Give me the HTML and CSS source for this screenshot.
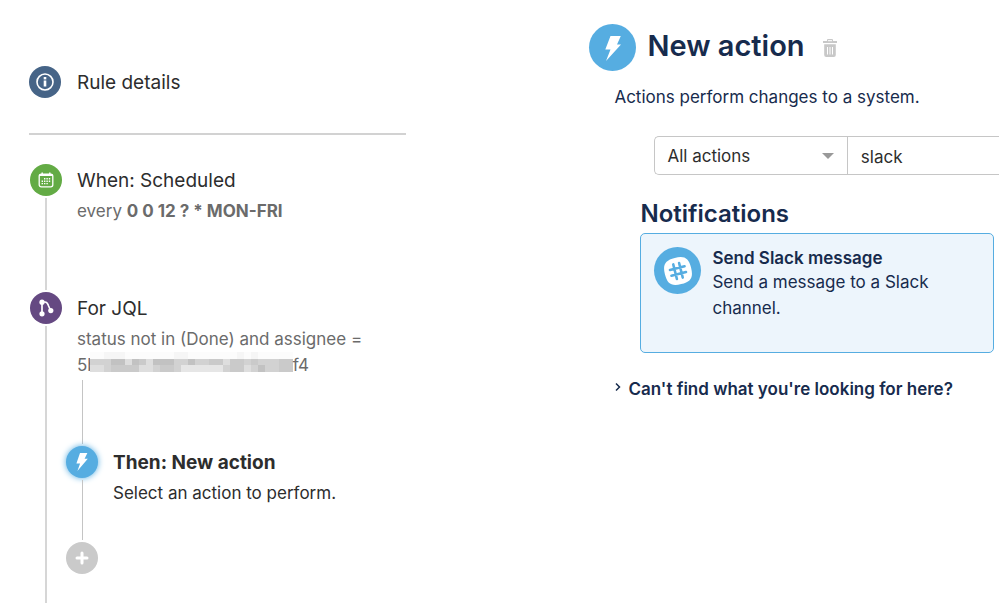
FILE: index.html
```html
<!DOCTYPE html>
<html lang="en">
<head>
  <meta charset="UTF-8">
  <meta name="viewport" content="width=device-width, initial-scale=1.0">
  <title>Automation rule</title>
  <link rel="stylesheet" href="styles.css">
</head>
<body>
  <section class="rule">
    <a class="rule-details" href="#details">
      <span class="icon icon-info">
        <svg width="20" height="20" viewBox="0 0 20 20" fill="none" stroke="#fff">
          <circle cx="10" cy="10" r="8" stroke-width="1.6"/>
          <path d="M10 8.5v6" stroke-width="2.6"/>
          <path d="M10 5v2.400" stroke-width="2.6"/>
        </svg>
      </span>
      <span class="title">Rule details</span>
    </a>

    <ol class="chain">
      <li class="step step-trigger">
        <div class="rail">
          <span class="icon icon-trigger">
            <svg width="16" height="16" viewBox="0 0 16 16" fill="none" stroke="#fff">
              <rect x="1.2" y="2.2" width="13.6" height="12.6" rx="2" stroke-width="1.3"/>
              <path d="M1.5 3h13" stroke-width="2"/>
              <path d="M4.2 .5v2M11.8 .5v2" stroke-width="1.4"/>
              <path d="M6 6.8h7M3.6 9.2h9.4M3.6 11.6h7" stroke-width="1.4" stroke-dasharray="1.4 1"/>
            </svg>
          </span>
          <span class="line"></span>
        </div>
        <div class="body">
          <div class="title">When: Scheduled</div>
          <div class="sub">every <b>0 0 12 ? * MON-FRI</b></div>
        </div>
      </li>

      <li class="step step-branch">
        <div class="rail">
          <span class="icon icon-branch">
            <svg width="16" height="18" viewBox="0 0 16 18" fill="none" stroke="#fff">
              <path d="M4 3v12M4 3h3c2.5 0 2.8 1.8 3.6 4l2 4.500" stroke-width="1.7"/>
              <circle cx="4" cy="3.200" r="2.6" fill="#fff" stroke="none"/>
              <circle cx="4" cy="14.800" r="2.6" fill="#fff" stroke="none"/>
              <circle cx="12.800" cy="11.600" r="2.6" fill="#fff" stroke="none"/>
            </svg>
          </span>
          <span class="line"></span>
        </div>
        <div class="body">
          <div class="title">For JQL</div>
          <div class="sub">status not in (Done) and assignee =<br>5b<svg class="redacted" width="203" height="20" viewBox="0 0 29 3" preserveAspectRatio="none" shape-rendering="crispEdges">
              <path fill="#fcfcfc" d="M0 0h29v1H0z"/>
              <path fill="#f6f6f6" d="M2 0h3v1H2zM12 0h2v1h-2zM21 0h1v1h-1zM23 0h1v1h-1z"/>
              <path fill="#d2d2d2" d="M0 1h29v2H0z"/>
              <path fill="#c2c2c2" d="M3 1h2v1H3zM6 1h1v1H6zM9 1h3v1H9zM14 1h1v1h-1zM24 2h1v1h-1z"/>
              <path fill="#cacaca" d="M7 1h1v1H7zM17 1h2v1h-2zM20 1h2v1h-2zM23 1h1v1h-1zM3 2h4v1H3zM10 2h2v1h-2zM20 2h2v1h-2zM27 1h2v2h-2z"/>
              <path fill="#dedede" d="M5 1h1v1H5zM8 1h1v1H8zM0 2h2v1H0zM7 2h2v1H7zM19 1h1v1h-1zM22 2h1v1h-1z"/>
              <path fill="#e6e6e6" d="M13 2h6v1h-6z"/>
            </svg>f4</div>

          <ol class="nested">
            <li class="nested-step">
              <div class="rail">
                <span class="line line-lead"></span>
                <span class="icon icon-action selected">
                  <svg width="14" height="18" viewBox="0 0 14 18"><path fill="#fff" d="M5 0h7.400L9.600 5.800h3.200L2.400 18l2.700-7.600H1.400z"/></svg>
                </span>
                <span class="line"></span>
              </div>
              <div class="body nested-body">
                <div class="title title-strong">Then: New action</div>
                <div class="sub sub-dark">Select an action to perform.</div>
              </div>
            </li>
            <li>
              <button class="icon icon-add" type="button" aria-label="Add component">
                <svg width="14" height="14" viewBox="0 0 14 14" fill="none" stroke="#fff" stroke-width="3" stroke-linecap="round"><path d="M7 2v10M2 7h10"/></svg>
              </button>
            </li>
          </ol>
        </div>
      </li>
    </ol>
  </section>

  <main class="detail">
    <header class="detail-header">
      <span class="icon icon-large">
        <svg width="18" height="28" viewBox="0 0 18 28"><path fill="#fff" d="M6.500 2h10.300L13 10.500h4L2 27l4.500-11.500H1.300z"/></svg>
      </span>
      <h1>New action</h1>
      <button class="delete" type="button" aria-label="Delete">
        <svg width="14" height="18" viewBox="0 0 14 18">
          <path fill="#c8c8c8" d="M0 2h4V1q0-1 1-1h4q1 0 1 1v1h4v2H0zM1.200 5.200h11.600V16q0 2-2 2H3.200q-2 0-2-2z"/>
          <path stroke="#fff" d="M5 1.700h4M4.500 8v7.500M7 8v7.500M9.500 8v7.500"/>
        </svg>
      </button>
    </header>

    <div class="detail-body">
      <p class="intro">Actions perform changes to a system.</p>

      <form class="filter">
        <div class="select-wrap">
          <select aria-label="Action category">
            <option>All actions</option>
          </select>
        </div>
        <input type="text" value="slack" aria-label="Search actions">
      </form>

      <section class="group">
        <h2>Notifications</h2>
        <button class="card" type="button">
          <span class="icon icon-large">
            <svg width="30" height="30" viewBox="0 0 30 30">
              <g transform="rotate(-14 15 15)">
                <path fill="#fff" d="M15 1.500C25 1.500 28.500 5 28.500 15S25 28.500 15 28.500 1.500 25 1.500 15 5 1.500 15 1.500z"/>
                <path fill="none" stroke="#56ade1" stroke-width="2.600" stroke-linecap="round" d="M12 7.500v15M18 7.500v15M7.500 12h15M7.500 18h15"/>
              </g>
            </svg>
          </span>
          <span class="card-text">
            <strong>Send Slack message</strong>
            <span>Send a message to a Slack channel.</span>
          </span>
        </button>
      </section>

      <button class="help" type="button" aria-expanded="false">
        <svg width="8" height="14" viewBox="0 0 8 14" fill="none" stroke="#172b4d" stroke-width="1.500"><path d="M2 1.500L5.500 5 2 8.500"/></svg>
        Can't find what you're looking for here?
      </button>
    </div>
  </main>
</body>
</html>
```

FILE: styles.css
```css
* {
  box-sizing: border-box;
}
body {
  margin: 0;
  min-height: 100vh;
  display: flex;
  justify-content: space-between;
  background: #fff;
  color: #2d2d2d;
  font-family: Inter, "Liberation Sans", sans-serif;
  font-size: 17px;
  line-height: 26px;
}
h1, h2, p, ol {
  margin: 0;
  padding: 0;
}
ol {
  list-style: none;
}
button, input, select {
  font: inherit;
  color: inherit;
}
button {
  padding: 0;
  border: none;
  background: none;
  text-align: left;
  cursor: pointer;
}

/* icons */
.icon {
  flex: none;
  display: flex;
  align-items: center;
  justify-content: center;
  width: 32px;
  height: 32px;
  border-radius: 50%;
}
.icon-info { background: #466487; }
.icon-trigger { background: #63ab45; }
.icon-branch { background: #654982; }
.icon-action { background: #56ade1; }
.icon-add { background: #cacaca; }
.icon-large {
  width: 47px;
  height: 47px;
  background: #56ade1;
}
.selected {
  box-shadow: 0 0 6px #56ade1;
}

/* rule chain */
.rule {
  width: 41%;
  display: flex;
  flex-direction: column;
  padding: 66px 4px 0 29px;
}
.rule-details {
  display: flex;
  gap: 16px;
  padding-bottom: 33px;
  border-bottom: 2px solid #d2d2d2;
  color: inherit;
  text-decoration: none;
}
.chain {
  flex: 1;
  display: flex;
  flex-direction: column;
  padding: 29px 0 0 1px;
}
.step {
  display: flex;
}
.step-trigger {
  min-height: 128px;
}
.step-branch {
  flex: 1;
}
.rail {
  display: flex;
  flex-direction: column;
  align-items: center;
}
.line {
  flex: 1;
  width: 2px;
  margin: 2px 0;
  background: #d6d6d6;
}
.step-branch > .rail > .line {
  margin-bottom: 0;
}
.body {
  flex: 1;
  padding-left: 15px;
}
.title {
  font-size: 19px;
  line-height: 34px;
}
.title-strong {
  font-weight: 700;
}
.sub {
  color: #6b6b6b;
}
.sub-dark {
  color: #2d2d2d;
}
.redacted {
  vertical-align: bottom;
  margin: 0 0 6px -8px;
}
.nested {
  margin-left: -11px;
}
.nested-step {
  display: flex;
  min-height: 164px;
}
.nested .line {
  width: 1px;
  background: #c4c4c4;
}
.nested .line-lead {
  flex: none;
  height: 64px;
}
.nested-body {
  padding-top: 68px;
}

/* action picker */
.detail {
  width: 41%;
  padding-top: 24px;
  color: #172b4d;
}
.detail-header {
  display: flex;
  align-items: center;
}
h1 {
  margin: 0 18px 0 11px;
  padding-bottom: 4px;
  font-size: 29px;
  line-height: 43px;
  font-weight: 600;
}
.delete {
  display: flex;
}
.detail-body {
  padding-left: 25px;
}
.intro {
  padding-top: 13px;
}
.filter {
  display: flex;
  height: 39px;
  margin: 26px 0 0 40px;
  border: 1px solid #c6c6c6;
  border-right: none;
  border-radius: 5px 0 0 5px;
  color: #2d2d2d;
}
.select-wrap {
  position: relative;
  flex: 0 0 56%;
}
.select-wrap::after {
  content: "";
  position: absolute;
  top: 16px;
  right: 14px;
  border: 6px solid transparent;
  border-top-color: #999;
  border-bottom: none;
  pointer-events: none;
}
.filter select {
  width: 100%;
  height: 100%;
  padding: 0 12px;
  border: none;
  border-right: 1px solid #c6c6c6;
  background: none;
  appearance: none;
}
.filter input {
  flex: 1;
  min-width: 0;
  padding: 2px 13px 0;
  border: none;
  background: none;
}
.group {
  padding: 23px 5px 0 26px;
}
h2 {
  font-size: 24px;
  line-height: 32px;
  font-weight: 600;
}
.card {
  display: flex;
  align-items: flex-start;
  gap: 11px;
  width: 100%;
  min-height: 120px;
  margin-top: 3px;
  padding: 13px;
  border: 1px solid #56ade1;
  border-radius: 5px;
  background: #edf5fc;
}
.card-text strong {
  display: block;
  line-height: 22px;
  font-weight: 600;
}
.help {
  display: flex;
  align-items: center;
  gap: 6px;
  margin-top: 23px;
  font-weight: 600;
}
```
